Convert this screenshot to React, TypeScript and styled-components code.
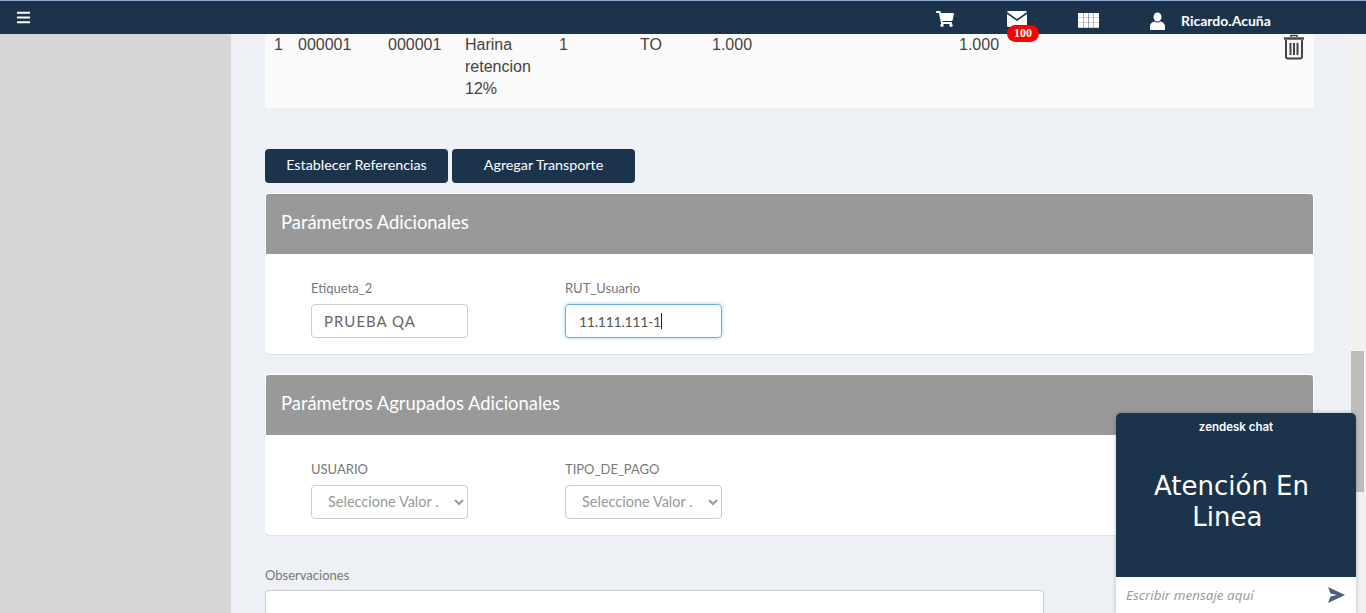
import React from 'react';
import styled, { createGlobalStyle } from 'styled-components';
import { FaBars, FaShoppingCart } from 'react-icons/fa';

const GlobalStyle = createGlobalStyle`
    html, body {
        margin: 0;
        padding: 0;
        height: 100%;
        overflow: hidden;
        font-family: Lato, "Liberation Sans", sans-serif;
    }
    * {
        box-sizing: border-box;
    }
`;

const Page = styled.div`
    width: 1366px;
    height: 613px;
    display: flex;
    flex-direction: column;
    overflow: hidden;
`;

const TopBar = styled.header`
    position: relative;
    z-index: 5;
    flex: 0 0 34px;
    display: flex;
    align-items: center;
    background: #1b344c;
    border-top: 1px solid #8fa6cf;
    color: #fff;
    padding-left: 16px;
`;

const MenuButton = styled.div`
    display: flex;
    font-size: 15px;
`;

const Nav = styled.nav`
    margin-left: auto;
    width: 430px;
    display: flex;
    align-items: center;
    font-size: 18px;
`;

const NavItem = styled.div<{ $width: number; $drop?: number }>`
    position: relative;
    flex: 0 0 ${(p) => p.$width}px;
    display: flex;
    align-items: center;
    margin-top: ${(p) => p.$drop ?? 0}px;
`;

const Badge = styled.span`
    position: absolute;
    left: 0;
    top: 14px;
    width: 32px;
    height: 17px;
    border-radius: 9px;
    background: #f00;
    color: #fff;
    font: bold 12px "Liberation Serif", serif;
    line-height: 17px;
    text-align: center;
`;

const UserName = styled.span`
    margin-left: 16px;
    font-size: 14px;
    font-weight: 700;
`;

const Body = styled.div`
    flex: 1;
    min-height: 0;
    display: flex;
`;

const Sidebar = styled.aside`
    flex: 0 0 231px;
    background: #d6d6d6;
    box-shadow: 1px 0 3px rgba(0, 0, 0, 0.15);
`;

const Main = styled.main`
    flex: 1;
    min-width: 0;
    background: #edf0f5;
    padding: 0 35px 0 34px;
    overflow: hidden;
`;

const ItemRow = styled.div`
    height: 74px;
    background: #fafafa;
    display: grid;
    grid-template-columns: 24px 90px 77px 94px 81px 72px 247px 324px auto;
    padding-left: 9px;
    font: 16px/22px "Liberation Sans", sans-serif;
    color: #444;
`;

const Cell = styled.div`
    white-space: pre-line;
`;

const TrashCell = styled.div`
    display: flex;
    color: #444;
`;

const Actions = styled.div`
    margin-top: 41px;
    display: flex;
    gap: 4px;
`;

const ActionButton = styled.button`
    width: 183px;
    height: 34px;
    padding: 0 0 3px;
    border: 0;
    border-radius: 4px;
    background: #1b344c;
    color: #fff;
    font: 400 14.3px Lato, sans-serif;
`;

const Panel = styled.section<{ $gap: number }>`
    margin-top: ${(p) => p.$gap}px;
    height: 161px;
    background: #fff;
    border: 1px solid #fff;
    border-radius: 4px;
    overflow: hidden;
    box-shadow: 0 1px 1px rgba(0, 0, 0, 0.06);
`;

const PanelHeader = styled.h3`
    margin: 0;
    height: 60px;
    padding: 0 15px 4px;
    display: flex;
    align-items: center;
    background: #999;
    color: #fff;
    font-size: 18.4px;
    font-weight: 400;
`;

const PanelBody = styled.div`
    display: flex;
    gap: 97px;
    padding: 25px 45px 0;
`;

const Field = styled.div`
    width: 157px;
`;

const Label = styled.label`
    display: block;
    height: 25px;
    font-size: 13px;
    line-height: 18px;
    color: #777;
`;

const TextInput = styled.input`
    display: block;
    width: 100%;
    height: 34px;
    padding: 0 12px;
    border: 1px solid #ccc;
    border-radius: 4px;
    outline: 0;
    color: #666;
    font: 15px Lato, sans-serif;
    letter-spacing: 1px;
`;

const FocusedInput = styled.div`
    height: 34px;
    padding: 0 13px;
    display: flex;
    align-items: center;
    border: 1px solid #66afe9;
    border-radius: 4px;
    box-shadow: 0 0 4px rgba(102, 175, 233, 0.6);
    color: #555;
    font: 14px Lato, sans-serif;
    letter-spacing: -0.25px;
`;

const Caret = styled.span`
    width: 1px;
    height: 16px;
    background: #222;
`;

const Select = styled.select`
    display: block;
    width: 100%;
    height: 34px;
    padding: 0 12px 2px;
    border: 1px solid #ccc;
    border-radius: 4px;
    background: #fff;
    color: #999;
    font: 14.5px Lato, sans-serif;
`;

const NotesLabel = styled.label`
    display: block;
    margin-top: 31px;
    height: 24px;
    font-size: 13px;
    line-height: 18px;
    color: #777;
`;

const Notes = styled.textarea`
    display: block;
    width: 779px;
    height: 100px;
    border: 1px solid #ccc;
    border-radius: 4px;
    background: #fff;
    resize: none;
`;

const ScrollTrack = styled.div`
    flex: 0 0 17px;
    padding: 317px 2px 0;
    background: #f1f1f1;
`;

const ScrollThumb = styled.div`
    height: 141px;
    background: #bdbdbd;
`;

const ChatWidget = styled.aside`
    position: fixed;
    z-index: 6;
    left: 1116px;
    top: 413px;
    width: 240px;
    height: 200px;
    display: flex;
    flex-direction: column;
    border-radius: 5px 5px 0 0;
    overflow: hidden;
    box-shadow: 0 0 4px rgba(0, 0, 0, 0.25);
`;

const ChatHeader = styled.div`
    flex: 1;
    display: flex;
    flex-direction: column;
    align-items: center;
    background: #1b344c;
    color: #fff;
`;

const ChatBrand = styled.div`
    margin-top: 7px;
    height: 14px;
    font: 600 11.5px/14px Inter, sans-serif;
`;

const ChatTitle = styled.div`
    margin: 37px 9px 0 0;
    width: 190px;
    text-align: center;
    white-space: pre-wrap;
    font: 26px/31px "DejaVu Sans", sans-serif;
`;

const ChatInputRow = styled.div`
    flex: 0 0 36px;
    display: flex;
    align-items: center;
    justify-content: space-between;
    padding: 0 11px 0 10px;
    background: #fff;
    color: #999;
    font: italic 13.5px "Open Sans", sans-serif;
`;

const EnvelopeIcon = () => (
    <svg width="20" height="16" viewBox="0 0 20 16" fill="currentColor">
        <path d="M1.5 0h17c.7 0 1.3.4 1.5 1L10 8 0 1c.2-.6.8-1 1.5-1z" />
        <path d="M0 3v11.5c0 .8.7 1.5 1.5 1.5h17c.8 0 1.5-.7 1.5-1.5V3l-10 7z" />
    </svg>
);

const GridIcon = () => (
    <svg width="21" height="15" viewBox="0 0 21 15" fill="currentColor">
        {[0, 5.33, 10.67, 16].map((x) =>
            [0, 5, 10].map((y) => <rect key={`${x}-${y}`} x={x} y={y} width="5" height="4.8" />),
        )}
    </svg>
);

const TrashIcon = () => (
    <svg width="22" height="26" viewBox="0 0 22 26" fill="none" stroke="currentColor">
        <path d="M8 3V1.5h6V3" strokeWidth="1.5" />
        <path d="M1 4.5h20" strokeWidth="2.4" />
        <path d="M3 6v16.5a2 2 0 0 0 2 2h12a2 2 0 0 0 2-2V6" strokeWidth="2" />
        <path d="M7.5 9v12M11 9v12M14.5 9v12" strokeWidth="2" />
    </svg>
);

const UserIcon = () => (
    <svg width="15" height="18" viewBox="0 0 15 18" fill="currentColor">
        <ellipse cx="7.5" cy="5" rx="4" ry="4.6" />
        <path d="M0 18v-3.5C0 11.5 2.5 10 4.5 9.5c1.8 1.3 4.2 1.3 6 0 2 .5 4.5 2 4.5 5V18z" />
    </svg>
);

const SendIcon = () => (
    <svg width="17" height="16" viewBox="0 0 17 16" fill="#4a6078">
        <path d="M0 0l17 8L0 16l2.5-6.5L9 8 2.5 6.5z" />
    </svg>
);

const App: React.FC = () => {
    const cells = ['1', '000001', '000001', 'Harina\nretencion\n12%', '1', 'TO', '1.000', '1.000'];

    return (
        <Page>
            <GlobalStyle />
            <TopBar>
                <MenuButton><FaBars /></MenuButton>
                <Nav>
                    <NavItem $width={71} $drop={2}><FaShoppingCart /></NavItem>
                    <NavItem $width={71} $drop={3}>
                        <EnvelopeIcon />
                        <Badge>100</Badge>
                    </NavItem>
                    <NavItem $width={72} $drop={5}><GridIcon /></NavItem>
                    <NavItem $width={200} $drop={6}>
                        <UserIcon />
                        <UserName>Ricardo.Acuña</UserName>
                    </NavItem>
                </Nav>
            </TopBar>
            <Body>
                <Sidebar />
                <Main>
                    <ItemRow>
                        {cells.map((cell, i) => <Cell key={i}>{cell}</Cell>)}
                        <TrashCell><TrashIcon /></TrashCell>
                    </ItemRow>
                    <Actions>
                        <ActionButton>Establecer Referencias</ActionButton>
                        <ActionButton>Agregar Transporte</ActionButton>
                    </Actions>
                    <Panel $gap={10}>
                        <PanelHeader>Parámetros Adicionales</PanelHeader>
                        <PanelBody>
                            <Field>
                                <Label>Etiqueta_2</Label>
                                <TextInput defaultValue="PRUEBA QA" />
                            </Field>
                            <Field>
                                <Label>RUT_Usuario</Label>
                                <FocusedInput>11.111.111-1<Caret /></FocusedInput>
                            </Field>
                        </PanelBody>
                    </Panel>
                    <Panel $gap={20}>
                        <PanelHeader>Parámetros Agrupados Adicionales</PanelHeader>
                        <PanelBody>
                            <Field>
                                <Label>USUARIO</Label>
                                <Select><option>Seleccione Valor .</option></Select>
                            </Field>
                            <Field>
                                <Label>TIPO_DE_PAGO</Label>
                                <Select><option>Seleccione Valor .</option></Select>
                            </Field>
                        </PanelBody>
                    </Panel>
                    <NotesLabel>Observaciones</NotesLabel>
                    <Notes />
                </Main>
                <ScrollTrack><ScrollThumb /></ScrollTrack>
            </Body>
            <ChatWidget>
                <ChatHeader>
                    <ChatBrand>zendesk chat</ChatBrand>
                    <ChatTitle>{'Atención En Linea '}</ChatTitle>
                </ChatHeader>
                <ChatInputRow>
                    Escribir mensaje aquí
                    <SendIcon />
                </ChatInputRow>
            </ChatWidget>
        </Page>
    );
};

export default App;
